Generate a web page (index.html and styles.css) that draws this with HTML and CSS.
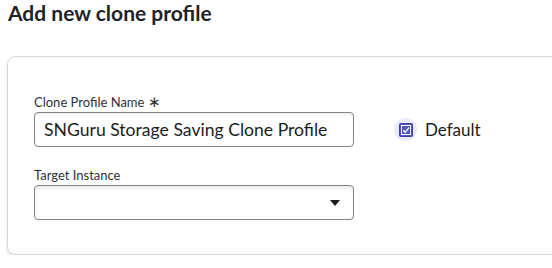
FILE: index.html
```html
<!DOCTYPE html>
<html>
<head>
<meta charset="utf-8">
<link rel="stylesheet" href="styles.css">
</head>
<body>
<div class="page">
  <h1 class="title">Add new clone profile</h1>
  <div class="card">
    <div class="row">
      <div class="field">
        <label class="label">Clone Profile Name <span class="req">∗</span></label>
        <div class="input">SNGuru Storage Saving Clone Profile</div>
      </div>
      <div class="check">
        <span class="halo">
          <svg class="box" width="14" height="14" viewBox="0 0 14 14">
            <rect x="0.5" y="0.5" width="13" height="13" rx="1" fill="#4f55c9" stroke="#3b3fa6"/>
            <rect x="2.5" y="2.5" width="9" height="9" fill="none" stroke="#ffffff" stroke-width="1"/>
            <path d="M4.2 7.2 L6.2 9.2 L10 4.6" fill="none" stroke="#ffffff" stroke-width="1.3"/>
          </svg>
        </span>
        <span class="check-label">Default</span>
      </div>
    </div>
    <div class="field field2">
      <label class="label">Target Instance</label>
      <div class="input select">
        <svg class="caret" width="10" height="6" viewBox="0 0 10 6"><path d="M0 0 H10 L5 6 Z" fill="#1a1a1a"/></svg>
      </div>
    </div>
  </div>
</div>
</body>
</html>
```
FILE: styles.css
```css
html, body {
  margin: 0;
  padding: 0;
  background: #ffffff;
  font-family: Lato, "Noto Sans", sans-serif;
  color: #1f2226;
  overflow: hidden;
}
.page {
  padding: 0 0 0 7px;
  width: 620px;
}
.title {
  margin: 0;
  padding: 0 0 0 1px;
  font-size: 21px;
  font-weight: 700;
  line-height: 26px;
  color: #1f2328;
}
.card {
  margin-top: 30px;
  border: 1px solid #d6d7de;
  border-radius: 8px;
  box-shadow: 0 2px 3px rgba(0,0,0,0.12);
  padding: 35px 26px 34px 26px;
  height: 199px;
  box-sizing: border-box;
}
.row {
  display: flex;
  align-items: flex-end;
  gap: 40px;
}
.field {
  display: flex;
  flex-direction: column;
  width: 320px;
}
.field2 {
  margin-top: 19px;
}
.label {
  font-size: 13px;
  line-height: 18px;
  color: #2e3338;
  margin-bottom: 1px;
}
.req {
  font-size: 15px;
  color: #2e3338;
}
.input {
  height: 35px;
  box-sizing: border-box;
  border: 1px solid #7e848c;
  border-radius: 4px;
  padding: 0 9px;
  font-size: 17.6px;
  line-height: 33px;
  color: #1a1d21;
  box-shadow: inset 0 2px 2px rgba(0,0,0,0.06);
}
.select {
  display: flex;
  justify-content: flex-end;
  align-items: center;
  padding-right: 13px;
  box-shadow: inset 0 3px 3px rgba(0,0,0,0.07);
}
.check {
  display: flex;
  align-items: center;
  height: 35px;
  gap: 8px;
}
.halo {
  width: 23px;
  height: 23px;
  border-radius: 50%;
  background: #e9ebfa;
  display: flex;
  align-items: center;
  justify-content: center;
}
.box { display: block; }
.check-label {
  font-size: 17px;
  color: #1a1d21;
}
```
